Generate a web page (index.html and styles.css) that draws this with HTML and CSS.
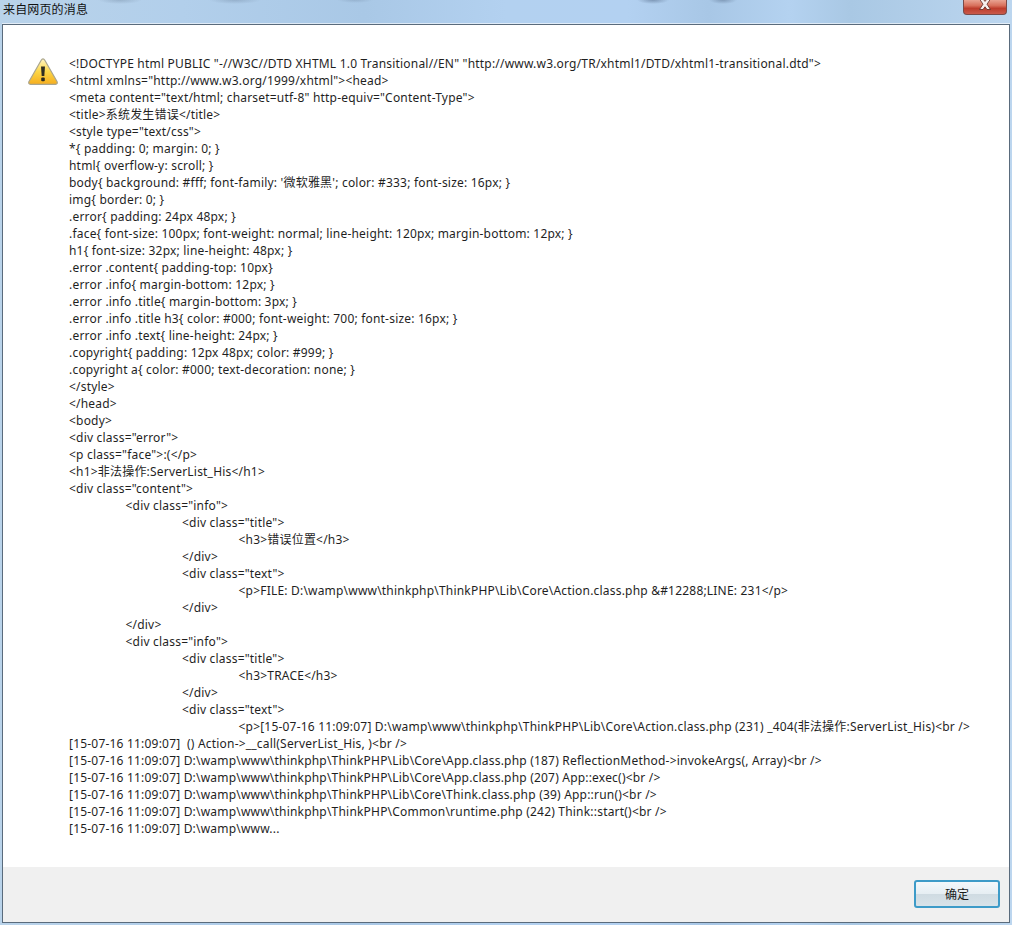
FILE: index.html
```html
<!DOCTYPE html>
<html lang="zh-CN">
<head>
<meta charset="utf-8">
<title>来自网页的消息</title>
<link rel="stylesheet" href="styles.css">
</head>
<body>
<div class="dialog">
  <header class="titlebar">
    <span class="title">来自网页的消息</span>
    <button class="close" aria-label="关闭"><svg width="14" height="10" viewBox="0 0 14 10"><path d="M1.5 -1 L5 -1 L7 1.4 L9 -1 L12.5 -1 L9 4.2 L12.5 9.5 L9 9.5 L7 6.8 L5 9.5 L1.5 9.5 L5 4.2 Z" fill="#f6f0ee" stroke="#5c2a22" stroke-width="0.8"/></svg></button>
  </header>
  <div class="frame">
    <main class="content">
      <svg class="warn" width="30" height="27" viewBox="0 0 30 27">
        <defs>
          <linearGradient id="w" x1="0" y1="0" x2="0" y2="1"><stop offset="0" stop-color="#fff6c4"/><stop offset="0.5" stop-color="#fcd648"/><stop offset="1" stop-color="#f6ae1e"/></linearGradient>
        </defs>
        <path d="M15 .8 Q16 .8 16.8 2.2 L29 23.5 Q30 26 27.5 26.3 L2.5 26.3 Q0 26 1 23.5 L13.2 2.2 Q14 .8 15 .8 Z" fill="url(#w)" stroke="#aaa58e" stroke-width="1.2"/>
        <path d="M13 8.5 H17 L16.3 18 H13.7 Z" fill="#2e2c22"/>
        <rect x="13.2" y="19.5" width="3.6" height="3.8" rx="1" fill="#2e2c22"/>
      </svg>
      <pre class="message">&lt;!DOCTYPE html PUBLIC "-//W3C//DTD XHTML 1.0 Transitional//EN" "http://www.w3.org/TR/xhtml1/DTD/xhtml1-transitional.dtd"&gt;
&lt;html xmlns="http://www.w3.org/1999/xhtml"&gt;&lt;head&gt;
&lt;meta content="text/html; charset=utf-8" http-equiv="Content-Type"&gt;
&lt;title&gt;系统发生错误&lt;/title&gt;
&lt;style type="text/css"&gt;
*{ padding: 0; margin: 0; }
html{ overflow-y: scroll; }
body{ background: #fff; font-family: '微软雅黑'; color: #333; font-size: 16px; }
img{ border: 0; }
.error{ padding: 24px 48px; }
.face{ font-size: 100px; font-weight: normal; line-height: 120px; margin-bottom: 12px; }
h1{ font-size: 32px; line-height: 48px; }
.error .content{ padding-top: 10px}
.error .info{ margin-bottom: 12px; }
.error .info .title{ margin-bottom: 3px; }
.error .info .title h3{ color: #000; font-weight: 700; font-size: 16px; }
.error .info .text{ line-height: 24px; }
.copyright{ padding: 12px 48px; color: #999; }
.copyright a{ color: #000; text-decoration: none; }
&lt;/style&gt;
&lt;/head&gt;
&lt;body&gt;
&lt;div class="error"&gt;
&lt;p class="face"&gt;:(&lt;/p&gt;
&lt;h1&gt;非法操作:ServerList_His&lt;/h1&gt;
&lt;div class="content"&gt;
	&lt;div class="info"&gt;
		&lt;div class="title"&gt;
			&lt;h3&gt;错误位置&lt;/h3&gt;
		&lt;/div&gt;
		&lt;div class="text"&gt;
			&lt;p&gt;FILE: D:\wamp\www\thinkphp\ThinkPHP\Lib\Core\Action.class.php &amp;#12288;LINE: 231&lt;/p&gt;
		&lt;/div&gt;
	&lt;/div&gt;
	&lt;div class="info"&gt;
		&lt;div class="title"&gt;
			&lt;h3&gt;TRACE&lt;/h3&gt;
		&lt;/div&gt;
		&lt;div class="text"&gt;
			&lt;p&gt;[15-07-16 11:09:07] D:\wamp\www\thinkphp\ThinkPHP\Lib\Core\Action.class.php (231) _404(非法操作:ServerList_His)&lt;br /&gt;
[15-07-16 11:09:07]  () Action-&gt;__call(ServerList_His, )&lt;br /&gt;
[15-07-16 11:09:07] D:\wamp\www\thinkphp\ThinkPHP\Lib\Core\App.class.php (187) ReflectionMethod-&gt;invokeArgs(, Array)&lt;br /&gt;
[15-07-16 11:09:07] D:\wamp\www\thinkphp\ThinkPHP\Lib\Core\App.class.php (207) App::exec()&lt;br /&gt;
[15-07-16 11:09:07] D:\wamp\www\thinkphp\ThinkPHP\Lib\Core\Think.class.php (39) App::run()&lt;br /&gt;
[15-07-16 11:09:07] D:\wamp\www\thinkphp\ThinkPHP\Common\runtime.php (242) Think::start()&lt;br /&gt;
[15-07-16 11:09:07] D:\wamp\www...</pre>
    </main>
    <footer class="actions">
      <button class="ok">确定</button>
    </footer>
  </div>
</div>
</body>
</html>
```
FILE: styles.css
```css
* { box-sizing: border-box; }
html, body { margin: 0; height: 100%; }
body {
  overflow: hidden;
  font-family: "Noto Sans", "Noto Sans CJK SC", sans-serif;
  font-size: 12px;
  color: #1f1f1f;
}
.dialog {
  height: 925px;
  display: flex;
  flex-direction: column;
  padding: 0 2px 2px;
  background:
    radial-gradient(ellipse 22px 4px at 120px 0, rgba(70, 90, 115, .25), transparent),
    radial-gradient(ellipse 26px 4px at 235px 0, rgba(70, 90, 115, .25), transparent),
    radial-gradient(ellipse 18px 3px at 355px 0, rgba(70, 90, 115, .2), transparent),
    radial-gradient(ellipse 16px 4px at 653px 0, rgba(50, 70, 100, .4), transparent),
    radial-gradient(ellipse 14px 4px at 723px 0, rgba(50, 70, 100, .35), transparent),
    linear-gradient(90deg, #b9d3ea 0, #b2cfeb 18%, #a9c8e6 36%, #b3d1f0 50%, #b3d1f1 62%, #a8c7e6 70%, #b4d2f0 78%, #a9c8e4 84%, #bcd6ef 100%);
}
.titlebar {
  height: 24px;
  flex: none;
  display: flex;
  justify-content: space-between;
  align-items: flex-start;
  box-shadow: inset 0 -1px 0 rgba(255, 255, 255, .6);
}
.title {
  font-size: 12px;
  line-height: 18px;
  letter-spacing: .15px;
  padding: 1px 0 0 1px;
  color: #111;
}
.close {
  width: 44px;
  height: 15px;
  margin-right: 3px;
  padding: 0;
  border: 1px solid #7a4a48;
  border-top: 0;
  border-radius: 0 0 4px 4px;
  background: linear-gradient(#e9a392 0, #d8705c 40%, #bd3c2c 60%, #c95a4b 100%);
  display: flex;
  justify-content: center;
  align-items: flex-start;
  overflow: hidden;
}
.frame {
  flex: 1;
  display: flex;
  flex-direction: column;
  border: 1px solid #5a6b7c;
  background: #fff;
  min-height: 0;
}
.content {
  flex: 1;
  min-height: 0;
  display: flex;
  align-items: flex-start;
  padding: 30px 0 0 25px;
}
.warn { flex: none; margin-right: 11px; margin-top: 3px; }
.message {
  margin: 0;
  font: inherit;
  letter-spacing: .2px;
  line-height: 17px;
  white-space: pre;
  tab-size: 56.5px;
}
.actions {
  height: 55px;
  flex: none;
  background: #f0f0f0;
  display: flex;
  justify-content: flex-end;
  align-items: flex-start;
  padding: 13px 9px 0 0;
}
.ok {
  width: 86px;
  height: 28px;
  padding: 0;
  font: inherit;
  color: #1a1a1a;
  border: 2px solid #3d9bc8;
  border-radius: 3px;
  background: linear-gradient(#f3f8fb 0, #e6eef3 48%, #cfdbe2 52%, #d8e3e9 100%);
}
```
